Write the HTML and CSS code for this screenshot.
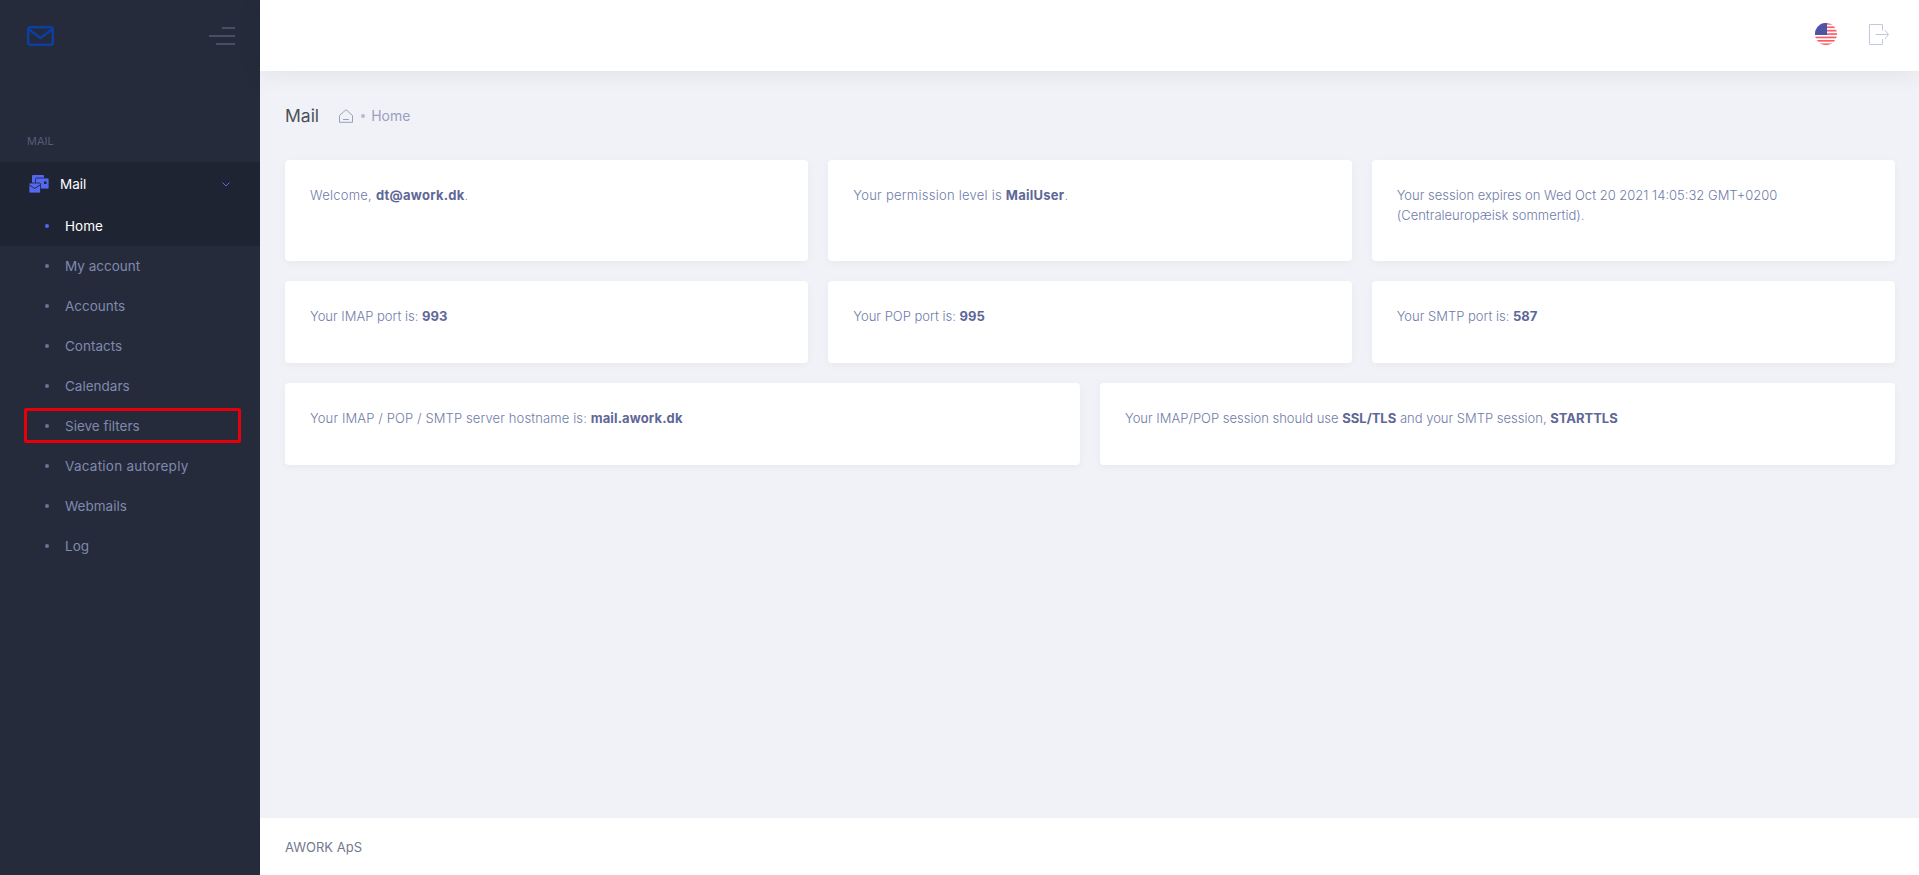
FILE: index.html
```html
<!DOCTYPE html>
<html lang="en">
<head>
    <meta charset="UTF-8">
    <meta name="viewport" content="width=device-width, initial-scale=1.0">
    <title>Mail</title>
    <link rel="stylesheet" href="styles.css">
</head>
<body>
    <aside class="sidebar">
        <div class="brand">
            <svg class="brand-logo" width="27" height="20" viewBox="0 0 27 20" fill="none" stroke="#0b3fa6" stroke-width="2.400">
                <rect x="1.200" y="1.200" width="24.600" height="17.600" rx="2.500"/>
                <path d="M2 3.500l11.500 8.500L25 3.500"/>
            </svg>
            <div class="burger"><span class="b1"></span><span class="b2"></span><span class="b3"></span></div>
        </div>
        <div class="menu-title">MAIL</div>
        <div class="menu-open">
            <div class="menu-head">
                <svg class="menu-icon" width="20" height="18" viewBox="0 0 20 18">
                    <rect x="3" y="0" width="12" height="10" rx="1" fill="#5468f0"/>
                    <rect x="6.500" y="3" width="13.500" height="11" rx="1" fill="#5468f0" stroke="#1f2433" stroke-width="0.800"/>
                    <rect x="15" y="6.500" width="2.500" height="2.500" fill="#1f2433"/>
                    <rect x="0" y="8" width="11.500" height="10" rx="1" fill="#5468f0" stroke="#1f2433" stroke-width="0.800"/>
                    <path d="M0.500 10l5.200 3.500L11 10" fill="none" stroke="#1f2433" stroke-width="0.900"/>
                </svg>
                <span class="menu-label">Mail</span>
                <svg class="menu-arrow" width="8" height="5" viewBox="0 0 8 5" fill="none" stroke="#5468f0" stroke-width="1"><path d="M0.500 0.500L4 4l3.500-3.500"/></svg>
            </div>
            <a class="sub-item active">Home</a>
        </div>
        <a class="sub-item">My account</a>
        <a class="sub-item">Accounts</a>
        <a class="sub-item">Contacts</a>
        <a class="sub-item">Calendars</a>
        <a class="sub-item">Sieve filters<span class="highlight"></span></a>
        <a class="sub-item wide">Vacation autoreply</a>
        <a class="sub-item">Webmails</a>
        <a class="sub-item">Log</a>
    </aside>

    <div class="main">
        <header class="topbar">
            <svg class="flag" width="22" height="22" viewBox="0 0 22 22">
                <defs><clipPath id="round"><circle cx="11" cy="11" r="11"/></clipPath></defs>
                <g clip-path="url(#round)">
                    <rect width="22" height="22" fill="#fff"/>
                    <rect y="0" width="22" height="1.700" fill="#ff5a66"/>
                    <rect y="3.400" width="22" height="1.700" fill="#ff5a66"/>
                    <rect y="6.800" width="22" height="1.700" fill="#ff5a66"/>
                    <rect y="10.200" width="22" height="1.700" fill="#ff5a66"/>
                    <rect y="13.600" width="22" height="1.700" fill="#ff5a66"/>
                    <rect y="17" width="22" height="1.700" fill="#ff5a66"/>
                    <rect y="20.400" width="22" height="1.700" fill="#ff5a66"/>
                    <rect width="12" height="12" fill="#4b56a5"/>
                </g>
            </svg>
            <svg class="logout" width="20" height="21" viewBox="0 0 20 21" fill="none" stroke="#c3c8dc" stroke-width="1">
                <path d="M13.500 6.500V0.500H0.500v20h13V15"/>
                <path d="M6.500 10.500h13M15.800 6l3.700 4.500-3.700 4.500"/>
            </svg>
        </header>

        <main class="content">
            <div class="page-title">
                <h1>Mail</h1>
                <svg class="home-icon" width="14" height="14" viewBox="0 0 14 14" fill="none" stroke="#9a9fc0" stroke-width="1">
                    <path d="M0.500 6.500L7 0.700l6.500 5.800v6.800H0.500z"/>
                    <path d="M4 10.500h6"/>
                </svg>
                <span class="crumb-dot"></span>
                <span class="crumb">Home</span>
            </div>

            <div class="row row-3">
                <div class="card tall wide">Welcome, <b>dt@awork.dk</b>.</div>
                <div class="card tall wide">Your permission level is <b>MailUser</b>.</div>
                <div class="card tall">Your session expires on Wed Oct 20 2021 14:05:32 GMT+0200 (Centraleuropæisk sommertid).</div>
            </div>
            <div class="row row-3">
                <div class="card">Your IMAP port is: <b>993</b></div>
                <div class="card">Your POP port is: <b>995</b></div>
                <div class="card">Your SMTP port is: <b>587</b></div>
            </div>
            <div class="row row-2">
                <div class="card slight">Your IMAP / POP / SMTP server hostname is: <b>mail.awork.dk</b></div>
                <div class="card">Your IMAP/POP session should use <b>SSL/TLS</b> and your SMTP session, <b>STARTTLS</b></div>
            </div>
        </main>

        <footer class="footer">AWORK ApS</footer>
    </div>
</body>
</html>
```

FILE: styles.css
```css
* {
    box-sizing: border-box;
}

html, body {
    height: 100%;
}

body {
    margin: 0;
    display: flex;
    overflow: hidden;
    font-family: 'Inter', 'Liberation Sans', sans-serif;
    background-color: #f1f2f7;
    color: #74788d;
}

.wide {
    letter-spacing: 0.250px;
}

.slight {
    letter-spacing: 0.120px;
}

/* sidebar */
.sidebar {
    width: 260px;
    flex-shrink: 0;
    background-color: #252b3b;
}

.brand {
    height: 71px;
    padding: 0 25px 0 27px;
    display: flex;
    align-items: center;
    justify-content: space-between;
}

.burger {
    width: 26px;
    display: flex;
    flex-direction: column;
    align-items: flex-end;
    gap: 6px;
}

.burger span {
    height: 2px;
    background-color: #4a5064;
}

.b1 { width: 13px; }
.b2 { width: 26px; }
.b3 { width: 19px; }

.menu-title {
    padding: 64px 27px 14px;
    font-size: 11px;
    color: #555c7a;
    line-height: 13px;
}

.menu-open {
    background-color: #1f2433;
}

.menu-head {
    height: 44px;
    padding: 0 30px 0 29px;
    display: flex;
    align-items: center;
    color: #fff;
    font-size: 13.500px;
}

.menu-label {
    margin-left: 11px;
    flex: 1;
}

.sub-item {
    position: relative;
    display: flex;
    align-items: center;
    height: 40px;
    padding-left: 65px;
    font-size: 13.500px;
    color: #8089ad;
}

.sub-item::before {
    content: "";
    position: absolute;
    left: 45px;
    top: 18px;
    width: 4px;
    height: 4px;
    border-radius: 50%;
    background-color: #6b7394;
}

.sub-item.active {
    color: #fff;
}

.sub-item.active::before {
    background-color: #5468f0;
}

.highlight {
    position: absolute;
    left: 24px;
    top: 2px;
    width: 217px;
    height: 35px;
    border: 3px solid #e6000b;
    border-radius: 2px;
}

/* main */
.main {
    flex: 1;
    min-width: 0;
    display: flex;
    flex-direction: column;
}

.topbar {
    height: 71px;
    flex-shrink: 0;
    background-color: #fff;
    box-shadow: 0 2px 24px rgba(18, 38, 63, 0.08);
    display: flex;
    align-items: center;
    justify-content: flex-end;
    gap: 32px;
    padding: 0 30px 3px 0;
}

.content {
    flex: 1;
    padding: 0 24px 0 25px;
}

.page-title {
    height: 89px;
    display: flex;
    align-items: center;
}

.page-title h1 {
    margin: 0 20px 0 0;
    font-size: 17.500px;
    font-weight: 400;
    color: #495057;
}

.crumb-dot {
    width: 4px;
    height: 4px;
    border-radius: 50%;
    background-color: #b6bad0;
    margin: 0 6px 0 8px;
}

.crumb {
    font-size: 14px;
    color: #9a9fc0;
}

.row {
    display: grid;
    gap: 20px;
    margin-bottom: 20px;
}

.row-3 {
    grid-template-columns: repeat(3, 1fr);
}

.row-2 {
    grid-template-columns: repeat(2, 1fr);
}

.card {
    min-height: 82px;
    padding: 25px;
    background-color: #fff;
    border-radius: 4px;
    box-shadow: 0 2px 8px rgba(18, 38, 63, 0.04);
    font-size: 13px;
    font-weight: 300;
    line-height: 20px;
    color: #6f7ba8;
}

.card.tall {
    min-height: 101px;
}

.card b {
    font-weight: 700;
    color: #5e6797;
}

.footer {
    height: 57px;
    flex-shrink: 0;
    padding-left: 25px;
    display: flex;
    align-items: center;
    background-color: #fff;
    font-size: 13px;
    color: #74788d;
}
```
